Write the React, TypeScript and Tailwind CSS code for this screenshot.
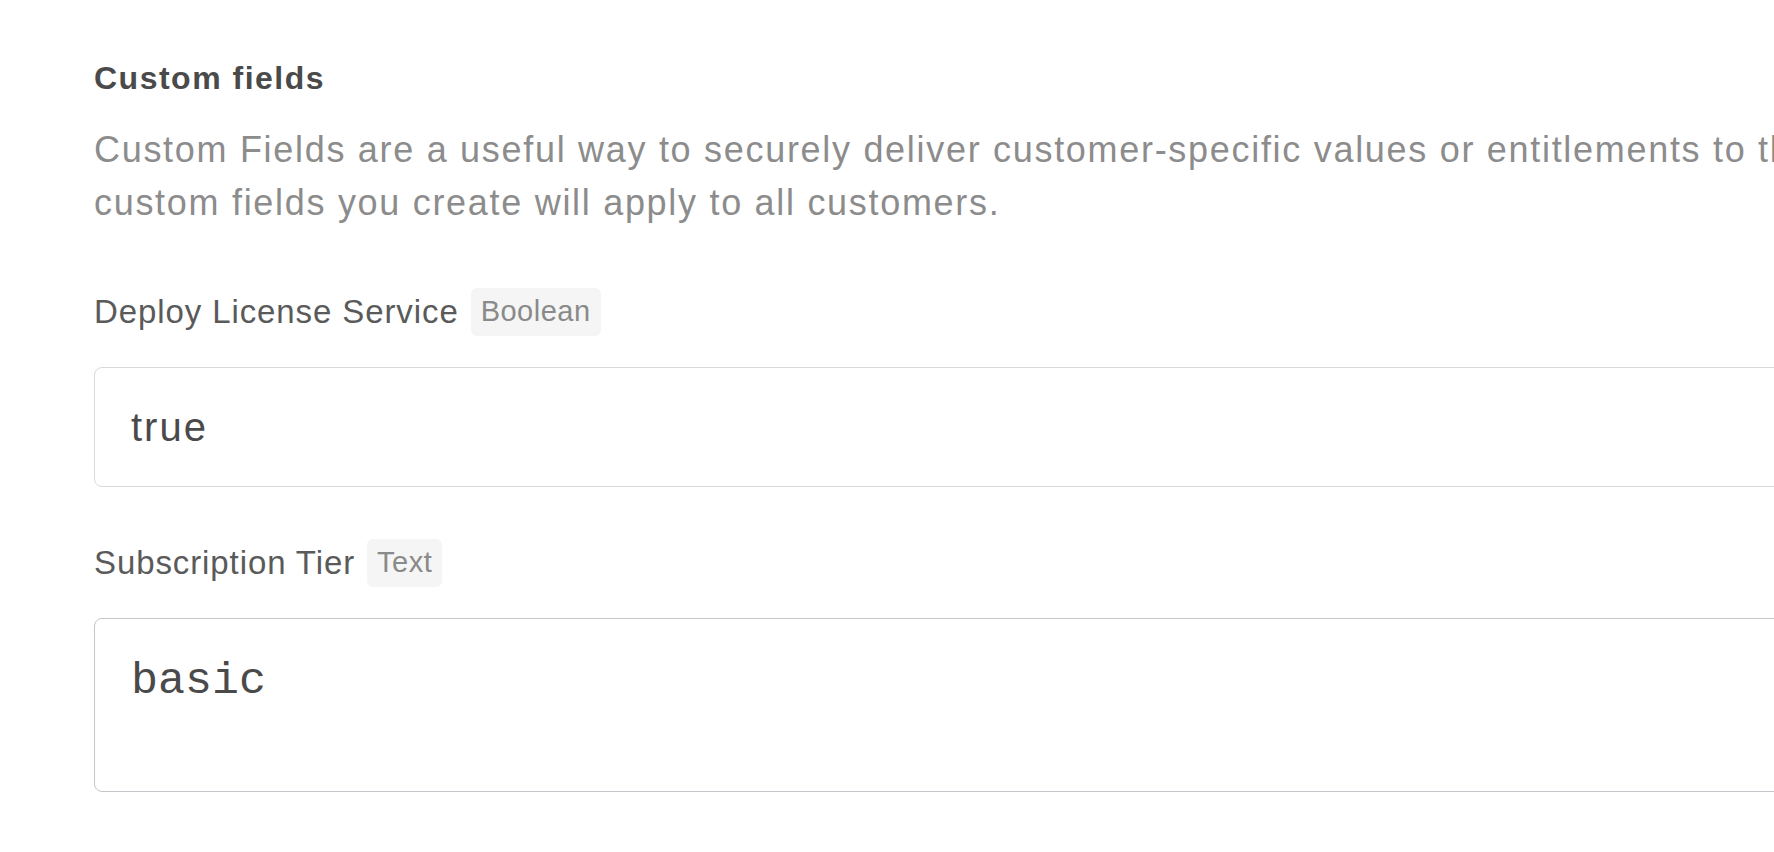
import React from 'react';

const fields = [
  { label: 'Deploy License Service', type: 'Boolean', value: 'true', multiline: false },
  { label: 'Subscription Tier', type: 'Text', value: 'basic', multiline: true },
];

export default function App() {
  return (
    <div className="w-screen h-screen overflow-hidden bg-white font-['Liberation_Sans',Arial,sans-serif]">
      <div className="w-[2600px] pl-[94px] pt-[58px]">
        {/* Header */}
        <h2 className="text-[32px] leading-[40px] font-bold tracking-[1.5px] text-[#4a4a4a]">Custom fields</h2>
        <p className="mt-[25px] text-[36px] leading-[53px] tracking-[1.7px] text-[#8c8c8c]">
          Custom Fields are a useful way to securely deliver customer-specific values or entitlements to the application. Any
          <br />
          custom fields you create will apply to all customers.
        </p>

        {/* Fields */}
        {fields.map((field, idx) => (
          <div key={field.label} className={idx === 0 ? 'mt-[59px]' : 'mt-[52px]'}>
            <div className="flex items-center gap-[12px] h-[48px]">
              <span className="text-[33px] tracking-[0.9px] text-[#5a5a5a]">{field.label}</span>
              <span className="h-[48px] px-[10px] flex items-center rounded-[6px] bg-[#f5f5f5] text-[29px] tracking-[0.5px] text-[#8a8a8a]">
                {field.type}
              </span>
            </div>
            {field.multiline ? (
              <textarea
                readOnly
                value={field.value}
                className="mt-[31px] block w-full h-[174px] resize-none rounded-[8px] border border-[#c2c6ca] pl-[36px] pt-[37px] font-['Liberation_Mono','Courier_New',monospace] text-[45px] leading-[52px] text-[#4a4a4a] outline-none"
              />
            ) : (
              <input
                readOnly
                value={field.value}
                className="mt-[31px] block w-full h-[120px] rounded-[8px] border border-[#d9d9d9] px-[36px] text-[40px] tracking-[2px] text-[#4a4a4a] outline-none"
              />
            )}
          </div>
        ))}
      </div>
    </div>
  );
}
